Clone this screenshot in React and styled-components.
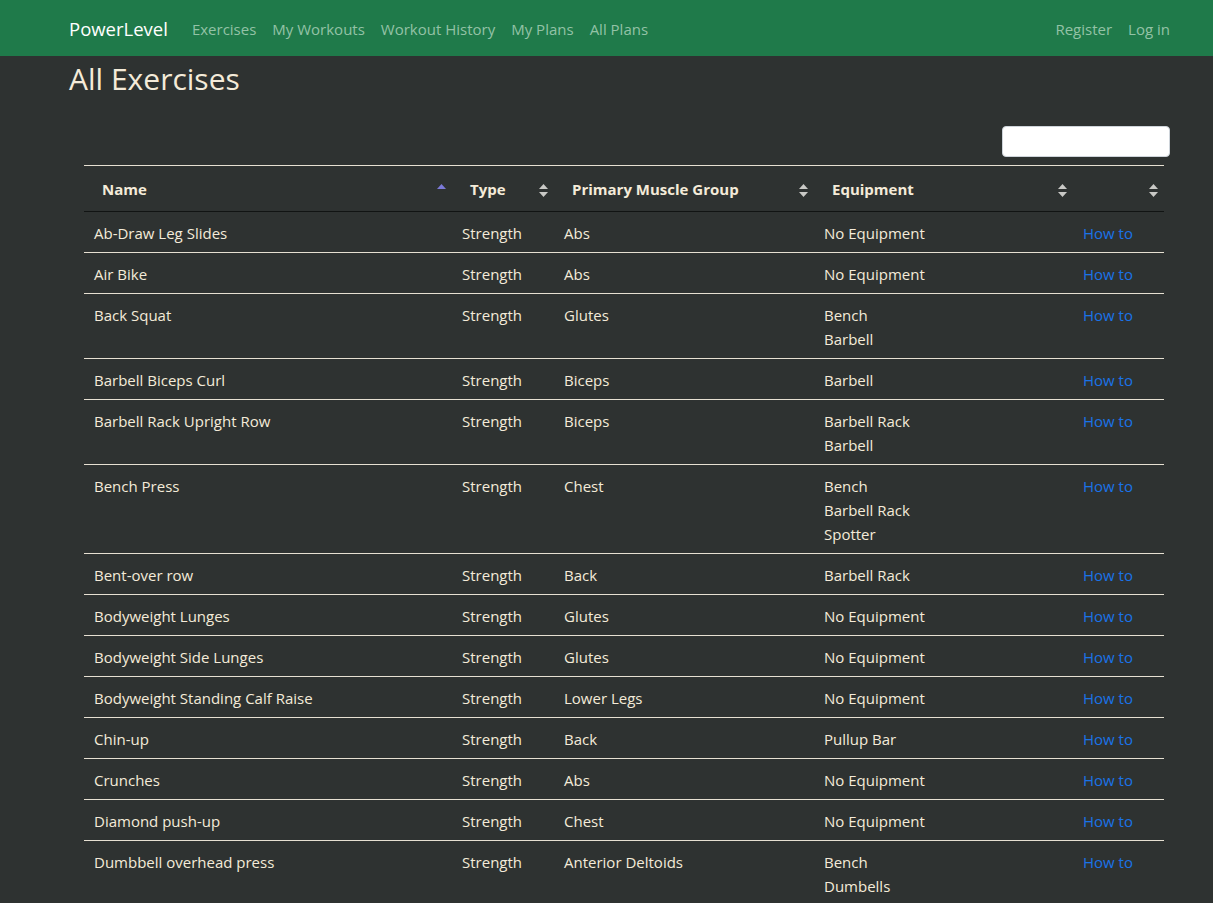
import React from 'react';
import styled, { createGlobalStyle } from 'styled-components';

const GlobalStyle = createGlobalStyle`
  body {
    margin: 0;
    background-color: #2e3231;
    color: #f4ebd9;
    font-family: "Open Sans", "Noto Sans", sans-serif;
    font-size: 15px;
    line-height: 24px;
  }
`

const Navbar = styled.nav`
  height: 56px;
  background-color: #1f7a4a;
  display: flex;
  align-items: center;
  padding: 2px 43px 0 69px;
  box-sizing: border-box;
`

const Brand = styled.a`
  color: #ffffff;
  font-size: 18.5px;
  margin-right: 16px;
  text-decoration: none;
`

const NavGroup = styled.div`
  display: flex;
  align-items: center;
  margin-left: ${props => props.right ? 'auto' : '0'};
`

const NavLink = styled.a`
  color: #93c2a6;
  font-size: 15px;
  padding: 0 8px;
  text-decoration: none;
  &:last-child {
    padding-right: ${props => props.edge ? '0' : '8px'};
  }
`

const Main = styled.main`
  padding: 0 43px 0 69px;
`

const Title = styled.h1`
  margin: 0;
  font-size: 30px;
  font-weight: 400;
  line-height: 44px;
  padding-top: 1px;
`

const SearchRow = styled.div`
  display: flex;
  justify-content: flex-end;
  margin-top: 25px;
`

const SearchInput = styled.input`
  width: 168px;
  height: 31px;
  box-sizing: border-box;
  border: 1px solid #ced4da;
  border-radius: 4px;
  background: #ffffff;
`

const TableWrap = styled.div`
  padding: 8px 6px 0 15px;
`

const Table = styled.table`
  width: 100%;
  border-collapse: collapse;
  table-layout: fixed;
`

const Th = styled.th`
  text-align: left;
  font-weight: 700;
  padding: 11px 18px 10px;
  border-top: 1px solid #e6e0d2;
  border-bottom: 1px solid #111413;
  position: relative;
`

const SortIcon = styled.svg`
  position: absolute;
  right: 6px;
  top: 18px;
`

const Td = styled.td`
  padding: 9px 10px 7px;
  border-top: 1px solid #e6e0d2;
  vertical-align: top;
`

const Line = styled.div`
  white-space: nowrap;
`

const HowTo = styled.a`
  color: #1a73e8;
  text-decoration: none;
`

function Sort({ active }) {
  return (
    <SortIcon width="9" height="13" viewBox="0 0 9 13">
      <polygon points="4.5,0 9,5 0,5" fill={active ? '#7c7ad8' : '#c9c9c6'} />
      {!active && <polygon points="0,8 9,8 4.5,13" fill="#c9c9c6" />}
    </SortIcon>
  )
}

const exercises = [
  ['Ab-Draw Leg Slides', 'Abs', ['No Equipment']],
  ['Air Bike', 'Abs', ['No Equipment']],
  ['Back Squat', 'Glutes', ['Bench', 'Barbell']],
  ['Barbell Biceps Curl', 'Biceps', ['Barbell']],
  ['Barbell Rack Upright Row', 'Biceps', ['Barbell Rack', 'Barbell']],
  ['Bench Press', 'Chest', ['Bench', 'Barbell Rack', 'Spotter']],
  ['Bent-over row', 'Back', ['Barbell Rack']],
  ['Bodyweight Lunges', 'Glutes', ['No Equipment']],
  ['Bodyweight Side Lunges', 'Glutes', ['No Equipment']],
  ['Bodyweight Standing Calf Raise', 'Lower Legs', ['No Equipment']],
  ['Chin-up', 'Back', ['Pullup Bar']],
  ['Crunches', 'Abs', ['No Equipment']],
  ['Diamond push-up', 'Chest', ['No Equipment']],
  ['Dumbbell overhead press', 'Anterior Deltoids', ['Bench', 'Dumbells']],
]

export default function App() {
  return (
    <>
      <GlobalStyle />
      <Navbar>
        <Brand href="#">PowerLevel</Brand>
        <NavGroup>
          <NavLink href="#">Exercises</NavLink>
          <NavLink href="#">My Workouts</NavLink>
          <NavLink href="#">Workout History</NavLink>
          <NavLink href="#">My Plans</NavLink>
          <NavLink href="#">All Plans</NavLink>
        </NavGroup>
        <NavGroup right>
          <NavLink href="#">Register</NavLink>
          <NavLink href="#" edge>Log in</NavLink>
        </NavGroup>
      </Navbar>
      <Main>
        <Title>All Exercises</Title>
        <SearchRow>
          <SearchInput type="search" aria-label="Search" />
        </SearchRow>
        <TableWrap>
          <Table>
            <colgroup>
              <col style={{ width: 368 }} />
              <col style={{ width: 102 }} />
              <col style={{ width: 260 }} />
              <col style={{ width: 259 }} />
              <col style={{ width: 91 }} />
            </colgroup>
            <thead>
              <tr>
                <Th>Name<Sort active /></Th>
                <Th>Type<Sort /></Th>
                <Th>Primary Muscle Group<Sort /></Th>
                <Th>Equipment<Sort /></Th>
                <Th><Sort /></Th>
              </tr>
            </thead>
            <tbody>
              {exercises.map(([name, muscle, equipment]) => (
                <tr key={name}>
                  <Td>{name}</Td>
                  <Td>Strength</Td>
                  <Td>{muscle}</Td>
                  <Td>
                    {equipment.map((item) => (
                      <Line key={item}>{item}</Line>
                    ))}
                  </Td>
                  <Td><HowTo href="#">How to</HowTo></Td>
                </tr>
              ))}
            </tbody>
          </Table>
        </TableWrap>
      </Main>
    </>
  )
}
